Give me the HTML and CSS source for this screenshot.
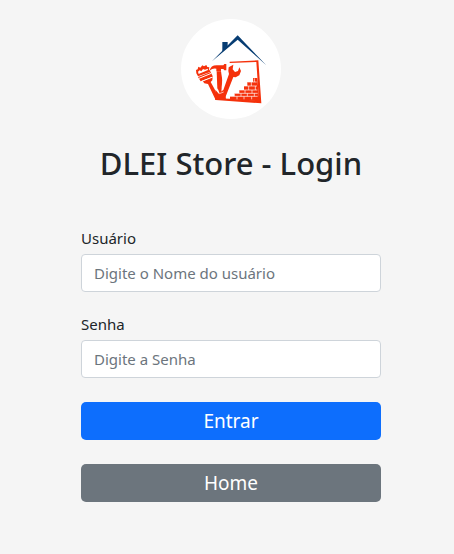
FILE: index.html
```html
<!DOCTYPE html>
<html lang="pt-BR">
<head>
<meta charset="utf-8">
<meta name="viewport" content="width=device-width, initial-scale=1">
<title>DLEI Store - Login</title>
<link rel="stylesheet" href="styles.css">
</head>
<body>
<main class="login">
  <svg class="logo" viewBox="18 27 300 300" role="img" aria-label="DLEI Store">
    <circle cx="168" cy="177" r="150" fill="#fff"/>
    <!-- roof and chimney -->
    <g fill="#073d73">
      <path d="M111 154L188 76L274 166L188 89Z"/>
      <path d="M142 96H158V110L142 125Z"/>
    </g>
    <g fill="#f5310b">
      <!-- wall frame -->
      <path d="M164 155L250 151L259 280L122 270L121 265L165 266L252 272L244 156L164 159Z"/>
      <!-- brush -->
      <path d="M64 190L63 180L68 178L70 170L76 173L82 166L87 169L94 165L97 171L103 172L102 178L107 185L69 199Z"/>
      <path d="M69 201L107 186L114 200L77 214Z"/>
      <path d="M83 213L113 201L112 211L107 216L119 238L131 268L122 270L99 222L88 220Z"/>
      <!-- hammer -->
      <path d="M104 182Q107 166 125 166H145L148 162H154V181H148L145 177H138V184H124V176Q112 174 104 182Z"/>
      <path d="M125 184H138L142 211L139 246L133 250L127 235Z"/>
      <!-- wrench -->
      <path d="M161 172L175 164L173 178L180 186L189 183L193 172L198 183L193 196L182 202L175 201L150 265L127 270L132 249L145 240L162 192L160 183Z"/>
      <path d="M121 239L134 254L149 246L153 267L121 270Z"/>
      <!-- brick stair -->
      <path d="M234 204H247L253 274L165 268V259H179V250H193V240H207V228H217V216H234Z"/>
    </g>
    <path d="M69 185L74 181L79 184L84 177L90 179L98 176L99 180L71 192Z" fill="#fff"/>
    <g fill="none" stroke="#fff" stroke-width="2">
      <path d="M72 205L109 190M78 215L113 201" stroke-width="3"/>
      <path d="M143 200L142 234M127 236L133 251L146 246"/>
      <path d="M217 216H245M207 228H246M193 240H247M179 250H248M165 259H248"/>
      <path d="M238 205V216M229 216V228M241 228V240M221 228V240M231 240V250M210 240V250M238 250V259M217 250V259M198 250V259M230 259V268M207 259V268M186 259V268"/>
    </g>
  </svg>
  <h1 class="title">DLEI Store - Login</h1>
  <form class="form">
    <div class="fields">
      <div class="field">
        <label for="usuario">Usuário</label>
        <input id="usuario" type="text" placeholder="Digite o Nome do usuário">
      </div>
      <div class="field">
        <label for="senha">Senha</label>
        <input id="senha" type="password" placeholder="Digite a Senha">
      </div>
    </div>
    <button class="btn btn-primary" type="submit">Entrar</button>
    <button class="btn btn-secondary" type="button">Home</button>
  </form>
</main>
</body>
</html>
```
FILE: styles.css
```css
* {
  box-sizing: border-box;
}

body {
  margin: 0;
  padding: 19px 0 24px 8px;
  background: #f5f5f5;
  color: #212529;
  font-family: "Segoe UI", "Noto Sans", "Open Sans", sans-serif;
  font-size: 15px;
  line-height: 24px;
}

.login {
  display: flex;
  flex-direction: column;
  align-items: center;
}

.logo {
  width: 100px;
  height: 100px;
}

.title {
  margin: 24px 0 43px;
  font-size: 31px;
  font-weight: 500;
  line-height: 40px;
  text-align: center;
}

.form {
  display: flex;
  flex-direction: column;
  gap: 24px;
  width: 100%;
  max-width: 300px;
}

.fields {
  display: flex;
  flex-direction: column;
  gap: 20px;
}

.field {
  display: flex;
  flex-direction: column;
  gap: 4px;
}

.field label {
  align-self: flex-start;
}

.field input {
  width: 100%;
  height: 38px;
  padding: 6px 12px;
  border: 1px solid #ced4da;
  border-radius: 4px;
  background: #fff;
  color: inherit;
  font: inherit;
}

.field input::placeholder {
  color: #6c757d;
  opacity: 1;
}

.btn {
  height: 38px;
  padding: 0 12px;
  border: 0;
  border-radius: 5px;
  color: #fff;
  font: inherit;
  font-size: 19px;
  cursor: pointer;
}

.btn-primary {
  background: #0d6efd;
}

.btn-secondary {
  background: #6c757d;
}
```
